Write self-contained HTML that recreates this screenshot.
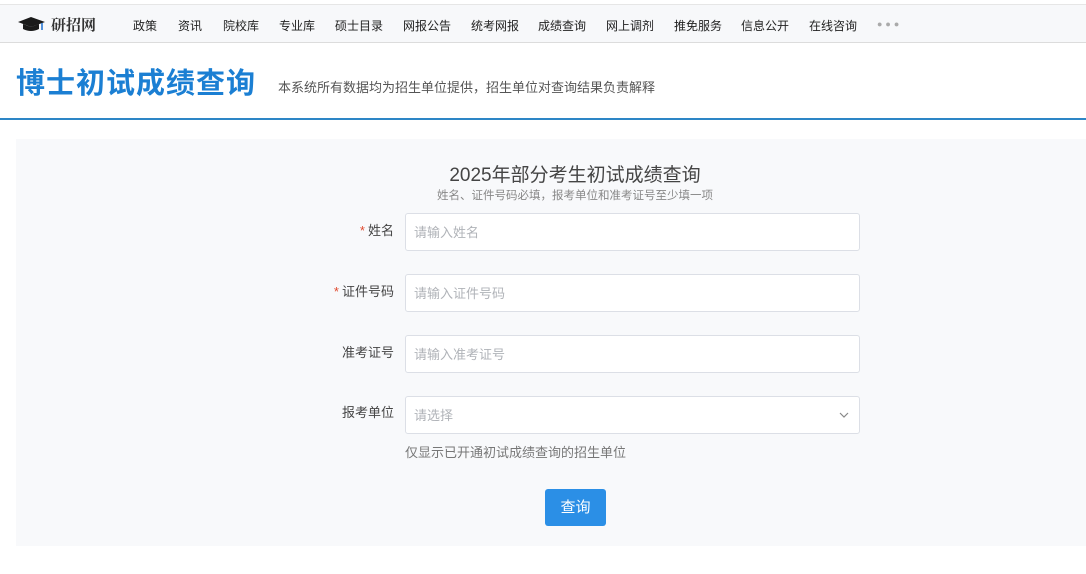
<!DOCTYPE html>
<html><head><meta charset="utf-8"><style>
*{margin:0;padding:0;box-sizing:border-box}
body{width:1086px;height:574px;background:#fff;font-family:"Liberation Sans","Noto Sans CJK SC",sans-serif;position:relative;overflow:hidden;color:#333}
.nav{position:absolute;left:0;top:4px;width:1086px;height:39px;background:#f7f8fa;border-top:1px solid #e6e6e6;border-bottom:1px solid #dcdcdc}
.logo{position:absolute;left:17px;top:9px;font-family:"Noto Serif CJK SC",serif;font-weight:bold;font-size:15px;color:#333;display:flex;align-items:center}
.nav a{position:absolute;top:12px;font-size:12px;color:#222;text-decoration:none}
.dots{position:absolute;left:877px;top:14px;color:#aaa;font-size:9px;letter-spacing:3px}
h1{position:absolute;left:16px;top:60px;font-size:29px;color:#1b7fd3;font-weight:bold;letter-spacing:1px}
.sub{position:absolute;left:278px;top:77px;font-size:13px;color:#555}
.line{position:absolute;left:0;top:118px;width:1086px;height:2px;background:#2d86c6}
.panel{position:absolute;left:16px;top:139px;width:1070px;height:407px;background:#f8f9fb}
.t{position:absolute;left:0;width:1150px;text-align:center;top:160px;font-size:19px;color:#444}
.tip{position:absolute;left:0;width:1150px;text-align:center;top:187px;font-size:11.5px;color:#888}
.lab{position:absolute;font-size:13px;color:#444;text-align:right;width:100px;left:294px}
.lab i{color:#e04a2e;font-style:normal;margin-right:3px}
.inp{position:absolute;left:405px;width:455px;height:38px;background:#fff;border:1px solid #dcdfe6;border-radius:3px;font-size:13px;color:#b0b3b8;padding:8px 0 0 8px}
.hint{position:absolute;left:405px;top:442px;font-size:13px;color:#777}
.btn{position:absolute;left:545px;top:489px;width:61px;height:37px;background:#2b8fe6;border-radius:3px;color:#fff;font-size:15px;text-align:center;line-height:37px}
</style></head><body>
<div class="nav">
<div class="logo"><svg width="30" height="18" viewBox="0 0 30 18"><path d="M1 6 L14 1 L28 6 L14 11 Z" fill="#1a1a1a"/><path d="M6 8 V13 Q14 17 22 13 V8 L14 11 Z" fill="#1a1a1a"/><path d="M25 7 V14" stroke="#1a6fd0" stroke-width="1.5"/></svg><span style="margin-left:4px">研招网</span></div>
<a style="left:133px">政策</a><a style="left:178px">资讯</a><a style="left:223px">院校库</a><a style="left:279px">专业库</a><a style="left:335px">硕士目录</a><a style="left:403px">网报公告</a><a style="left:471px">统考网报</a><a style="left:538px">成绩查询</a><a style="left:606px">网上调剂</a><a style="left:674px">推免服务</a><a style="left:741px">信息公开</a><a style="left:809px">在线咨询</a>
<span class="dots">●●●</span>
</div>
<h1>博士初试成绩查询</h1>
<div class="sub">本系统所有数据均为招生单位提供，招生单位对查询结果负责解释</div>
<div class="line"></div>
<div class="panel"></div>
<div class="t">2025年部分考生初试成绩查询</div>
<div class="tip">姓名、证件号码必填，报考单位和准考证号至少填一项</div>
<div class="lab" style="top:220px"><i>*</i>姓名</div>
<div class="inp" style="top:213px">请输入姓名</div>
<div class="lab" style="top:281px"><i>*</i>证件号码</div>
<div class="inp" style="top:274px">请输入证件号码</div>
<div class="lab" style="top:342px">准考证号</div>
<div class="inp" style="top:335px">请输入准考证号</div>
<div class="lab" style="top:402px">报考单位</div>
<div class="inp" style="top:396px">请选择<svg style="position:absolute;right:10px;top:15px" width="10" height="6" viewBox="0 0 10 6"><path d="M1 1 L5 5 L9 1" fill="none" stroke="#888" stroke-width="1.2"/></svg></div>
<div class="hint">仅显示已开通初试成绩查询的招生单位</div>
<div class="btn">查询</div>
</body></html>
